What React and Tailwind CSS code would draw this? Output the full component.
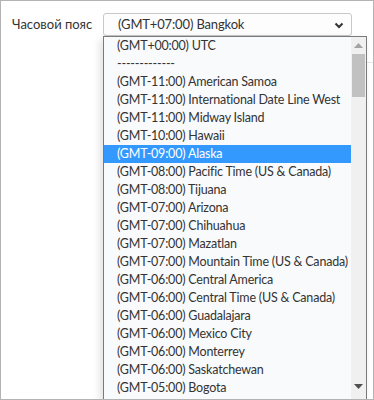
import React from "react";

const zones = [
  "(GMT+00:00) UTC",
  "-------------",
  "(GMT-11:00) American Samoa",
  "(GMT-11:00) International Date Line West",
  "(GMT-11:00) Midway Island",
  "(GMT-10:00) Hawaii",
  "(GMT-09:00) Alaska",
  "(GMT-08:00) Pacific Time (US & Canada)",
  "(GMT-08:00) Tijuana",
  "(GMT-07:00) Arizona",
  "(GMT-07:00) Chihuahua",
  "(GMT-07:00) Mazatlan",
  "(GMT-07:00) Mountain Time (US & Canada)",
  "(GMT-06:00) Central America",
  "(GMT-06:00) Central Time (US & Canada)",
  "(GMT-06:00) Guadalajara",
  "(GMT-06:00) Mexico City",
  "(GMT-06:00) Monterrey",
  "(GMT-06:00) Saskatchewan",
  "(GMT-05:00) Bogota",
];

const App = () => {
  return (
    <div className="relative w-[374px] h-[400px] overflow-hidden bg-white border border-[#b3b3b3] font-['Lato',sans-serif] text-[13px] text-[#333]">
      <div className="flex items-center pt-3 pl-[11px]">
        <span className="w-[91px] text-[#333]">Часовой пояс</span>
        <div className="flex items-center justify-between w-[249px] h-[23px] pl-[14px] pr-[6px] rounded-[3px] border border-[#c8c8c8] bg-[#fdfdfd]">
          <span className="tracking-[-0.15px]">(GMT+07:00) Bangkok</span>
          <svg width="12" height="12" viewBox="0 0 12 12">
            <path d="M2.5 4.5 L6 8 L9.5 4.5" fill="none" stroke="#333" strokeWidth="2" />
          </svg>
        </div>
      </div>
      <div className="ml-[102px] mt-[26px] border-b border-[#e6e6e6]" />

      {/* open dropdown list */}
      <div className="absolute left-[102px] top-[35px] w-[264px] h-[364px] flex border border-[#7a7a7a] bg-[#f9fafc] shadow-[-3px_3px_8px_rgba(0,0,0,0.12)]">
        <div className="flex-1 overflow-hidden text-[12.5px]">
          {zones.map((z, i) => (
            <div
              key={i}
              className={
                i === 6
                  ? "h-[18px] leading-[18px] pl-[13px] whitespace-nowrap tracking-[-0.2px] bg-[#3399ff] text-white"
                  : "h-[18px] leading-[18px] pl-[13px] whitespace-nowrap tracking-[-0.2px]"
              }
            >
              {z}
            </div>
          ))}
        </div>
        <div className="w-[15px] flex flex-col bg-[#f0f0f0]">
          <div className="h-[17px] flex items-center justify-center">
            <svg width="9" height="5" viewBox="0 0 9 5">
              <path d="M0 5 L4.5 0 L9 5 Z" fill="#a3a3a3" />
            </svg>
          </div>
          <div className="mx-[1px] h-[43px] bg-[#c1c1c1]" />
          <div className="flex-1" />
          <div className="h-[17px] flex items-center justify-center mb-[4px]">
            <svg width="9" height="5" viewBox="0 0 9 5">
              <path d="M0 0 L9 0 L4.5 5 Z" fill="#505050" />
            </svg>
          </div>
        </div>
      </div>
    </div>
  );
};

export default App;
